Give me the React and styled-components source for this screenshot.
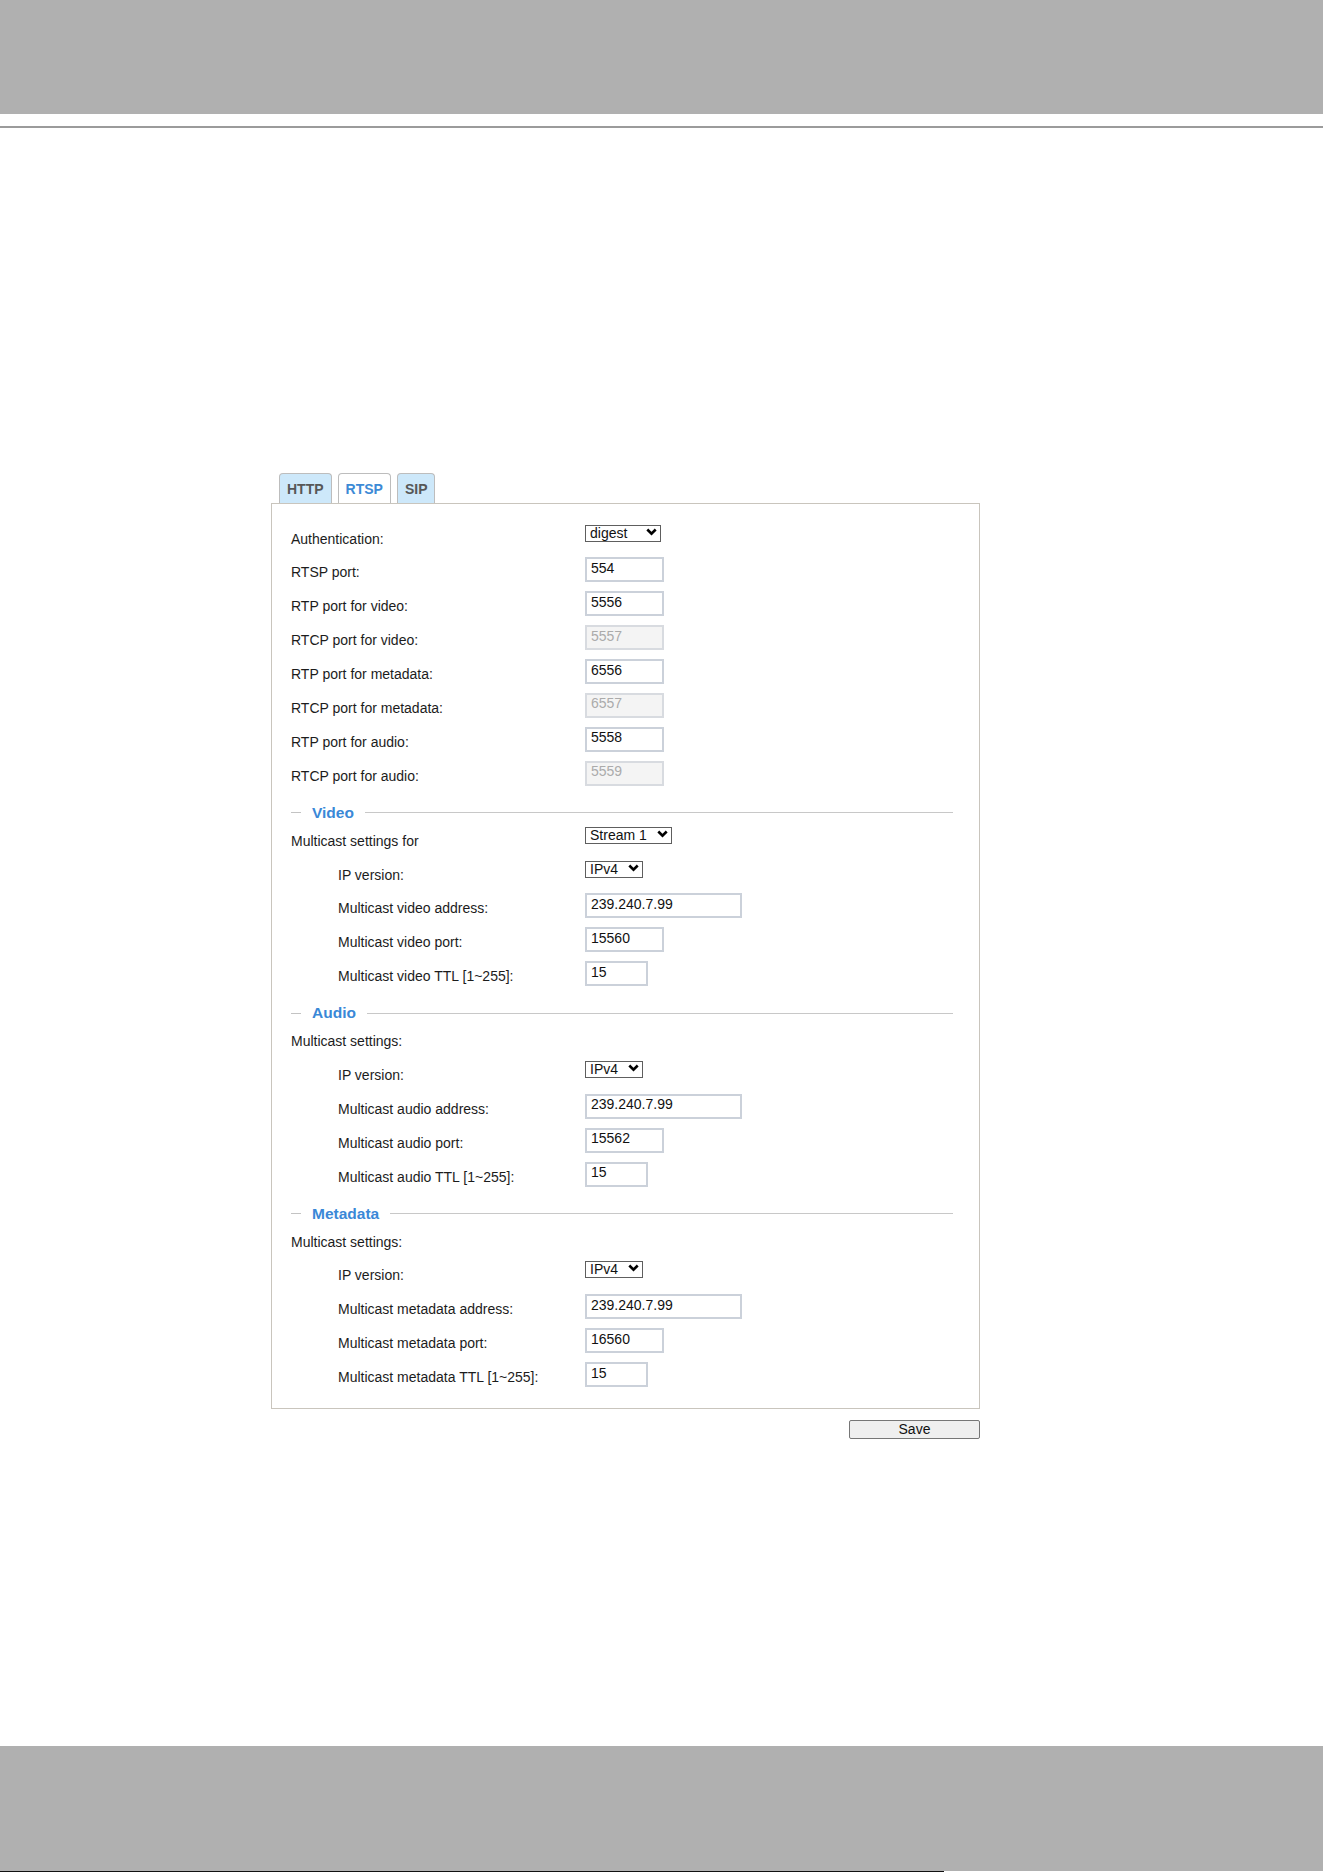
import React from "react";
import styled, { createGlobalStyle } from "styled-components";

const GlobalStyle = createGlobalStyle`
  html, body {
    margin: 0;
    padding: 0;
    background: #ffffff;
  }
  body {
    font-family: "Liberation Sans", Arial, sans-serif;
    color: #1c1c1c;
  }
`;

const Page = styled.div`
  width: 1324px;
  min-height: 1872px;
  display: flex;
  flex-direction: column;
`;

const TopBand = styled.div`
  width: 1323px;
  height: 114px;
  background: #b0b0b0;
`;

const Rule = styled.div`
  width: 1323px;
  height: 2px;
  margin-top: 12px;
  background: #9b9b9b;
`;

const Panel = styled.div`
  width: 709px;
  margin: 345px 0 0 271px;
  display: flex;
  flex-direction: column;
`;

const TabBar = styled.div`
  display: flex;
  gap: 6px;
  padding-left: 8px;
  height: 30px;
  align-items: flex-end;
`;

const Tab = styled.div`
  box-sizing: border-box;
  height: 30px;
  padding: 0 7px;
  display: flex;
  align-items: center;
  font-size: 14px;
  font-weight: bold;
  color: ${(p) => (p.$active ? "#3c8ad6" : "#575757")};
  background: ${(p) => (p.$active ? "#ffffff" : "#cde8fa")};
  border: 1px solid #bdbdbd;
  border-bottom: none;
  border-radius: 4px 4px 0 0;
`;

const Card = styled.div`
  border: 1px solid #c9c5bd;
  padding: 15.5px 26px 16px 19px;
  display: flex;
  flex-direction: column;
`;

const Row = styled.div`
  display: grid;
  grid-template-columns: 294px 1fr;
  height: 33.9px;
  align-items: start;
`;

const Label = styled.div`
  margin-top: 11px;
  padding-left: ${(p) => (p.$indent ? 47 : 0)}px;
  font-size: 14px;
  line-height: 17px;
  color: #1c1c1c;
  white-space: nowrap;
`;

const Field = styled.div`
  padding-top: 4px;
  display: flex;
`;

const TextInput = styled.input`
  box-sizing: border-box;
  width: ${(p) => p.$w}px;
  height: 25px;
  margin: 0;
  padding: 1px 4px 5px;
  border: 2px solid ${(p) => (p.disabled ? "#d8dbe0" : "#cbd1da")};
  border-radius: 0;
  background: ${(p) => (p.disabled ? "#f4f4f4" : "#ffffff")};
  color: ${(p) => (p.disabled ? "#ababab" : "#111111")};
  font-family: "Liberation Sans", Arial, sans-serif;
  font-size: 14px;
  line-height: 15px;
  outline: none;
`;

const SelectBox = styled.div`
  position: relative;
  width: ${(p) => p.$w}px;
  height: 17px;
`;

const NativeSelect = styled.select`
  appearance: none;
  -webkit-appearance: none;
  box-sizing: border-box;
  width: 100%;
  height: 17px;
  margin: 0;
  padding: 0 16px 0 4px;
  border: 1px solid #5e5e5e;
  border-radius: 0;
  background: #ffffff;
  color: #111111;
  font-family: "Liberation Sans", Arial, sans-serif;
  font-size: 14px;
  line-height: 15px;
  outline: none;
`;

const Chevron = styled.svg`
  position: absolute;
  right: 4px;
  top: 4px;
  width: 11px;
  height: 8px;
  pointer-events: none;
`;

const SectionHead = styled.div`
  height: 31px;
  box-sizing: border-box;
  padding-top: 14px;
`;

const SectionLine = styled.div`
  display: flex;
  align-items: center;
  gap: 11px;
  height: 16px;
  &::before {
    content: "";
    width: 10px;
    height: 1px;
    background: #c3c3c3;
  }
  &::after {
    content: "";
    flex: 1;
    height: 1px;
    background: #c8c8c8;
  }
`;

const SectionTitle = styled.span`
  font-size: 15.5px;
  font-weight: bold;
  color: #3a88d7;
  line-height: 16px;
`;

const Actions = styled.div`
  display: flex;
  justify-content: flex-end;
  margin-top: 11px;
`;

const SaveButton = styled.button`
  box-sizing: border-box;
  width: 131px;
  height: 19px;
  padding: 0;
  border: 1px solid #767676;
  border-radius: 2px;
  background: #efefef;
  color: #111111;
  font-family: "Liberation Sans", Arial, sans-serif;
  font-size: 14px;
  line-height: 15px;
`;

const BottomBand = styled.div`
  margin-top: auto;
  width: 1323px;
  height: 125px;
  background: #b0b0b0;
`;

const EdgeLine = styled.div`
  width: 944px;
  height: 1px;
  background: #111111;
`;

const Select = ({ w, value, options }) => (
  <SelectBox $w={w}>
    <NativeSelect defaultValue={value}>
      {options.map((o) => (
        <option key={o}>{o}</option>
      ))}
    </NativeSelect>
    <Chevron viewBox="0 0 11 8">
      <path d="M1.3 1.5 L5.5 5.7 L9.7 1.5" fill="none" stroke="#000" strokeWidth="2.6" />
    </Chevron>
  </SelectBox>
);

const renderField = (f) => {
  if (!f) return null;
  if (f.type === "select") return <Select w={f.w} value={f.value} options={f.options} />;
  return <TextInput $w={f.w} defaultValue={f.value} disabled={f.disabled} />;
};

const port = (value, disabled) => ({ type: "input", w: 79, value, disabled });
const ipVersion = { type: "select", w: 58, value: "IPv4", options: ["IPv4", "IPv6"] };
const address = { type: "input", w: 157, value: "239.240.7.99" };
const ttl = { type: "input", w: 63, value: "15" };

const generalRows = [
  { label: "Authentication:", field: { type: "select", w: 76, value: "digest", options: ["disable", "basic", "digest"] } },
  { label: "RTSP port:", field: port("554") },
  { label: "RTP port for video:", field: port("5556") },
  { label: "RTCP port for video:", field: port("5557", true) },
  { label: "RTP port for metadata:", field: port("6556") },
  { label: "RTCP port for metadata:", field: port("6557", true) },
  { label: "RTP port for audio:", field: port("5558") },
  { label: "RTCP port for audio:", field: port("5559", true) },
];

const sections = [
  {
    title: "Video",
    rows: [
      { label: "Multicast settings for", field: { type: "select", w: 87, value: "Stream 1", options: ["Stream 1", "Stream 2", "Stream 3"] } },
      { label: "IP version:", indent: true, field: ipVersion },
      { label: "Multicast video address:", indent: true, field: address },
      { label: "Multicast video port:", indent: true, field: port("15560") },
      { label: "Multicast video TTL [1~255]:", indent: true, field: ttl },
    ],
  },
  {
    title: "Audio",
    rows: [
      { label: "Multicast settings:" },
      { label: "IP version:", indent: true, field: ipVersion },
      { label: "Multicast audio address:", indent: true, field: address },
      { label: "Multicast audio port:", indent: true, field: port("15562") },
      { label: "Multicast audio TTL [1~255]:", indent: true, field: ttl },
    ],
  },
  {
    title: "Metadata",
    rows: [
      { label: "Multicast settings:" },
      { label: "IP version:", indent: true, field: ipVersion },
      { label: "Multicast metadata address:", indent: true, field: address },
      { label: "Multicast metadata port:", indent: true, field: port("16560") },
      { label: "Multicast metadata TTL [1~255]:", indent: true, field: ttl },
    ],
  },
];

const FormRow = ({ row }) => (
  <Row>
    <Label $indent={row.indent}>{row.label}</Label>
    <Field>{renderField(row.field)}</Field>
  </Row>
);

export default function App() {
  return (
    <>
      <GlobalStyle />
      <Page>
        <TopBand />
        <Rule />
        <Panel>
          <TabBar>
            <Tab>HTTP</Tab>
            <Tab $active>RTSP</Tab>
            <Tab>SIP</Tab>
          </TabBar>
          <Card>
            {generalRows.map((r) => (
              <FormRow key={r.label} row={r} />
            ))}
            {sections.map((s) => (
              <React.Fragment key={s.title}>
                <SectionHead>
                  <SectionLine>
                    <SectionTitle>{s.title}</SectionTitle>
                  </SectionLine>
                </SectionHead>
                {s.rows.map((r) => (
                  <FormRow key={s.title + r.label} row={r} />
                ))}
              </React.Fragment>
            ))}
          </Card>
          <Actions>
            <SaveButton type="button">Save</SaveButton>
          </Actions>
        </Panel>
        <BottomBand />
        <EdgeLine />
      </Page>
    </>
  );
}
